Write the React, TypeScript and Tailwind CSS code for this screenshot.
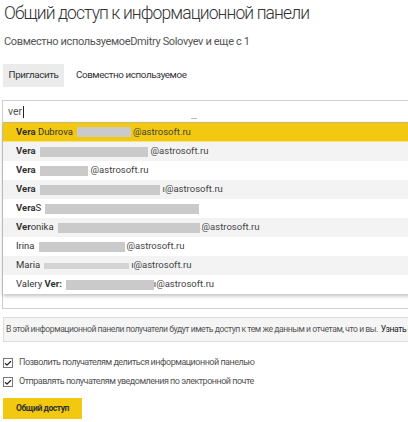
import { Check } from "lucide-react";

const rows = [
  { bold: "Vera", rest: " Dubrova", block: 54, gap: 4, email: "@astrosoft.ru" },
  { bold: "Vera", rest: "", block: 108, gap: 5, email: "@astrosoft.ru" },
  { bold: "Vera", rest: "", block: 48, gap: 5, email: "@astrosoft.ru" },
  { bold: "Vera", rest: "", block: 120, gap: 5, email: "ı@astrosoft.ru" },
  { bold: "Vera", rest: "S", block: 154, gap: 5, email: "" },
  { bold: "Ver", rest: "onika", block: 142, gap: 4, email: "@astrosoft.ru" },
  { bold: "", rest: "Irina", block: 86, gap: 4, email: "@astrosoft.ru" },
  { bold: "", rest: "Maria", block: 85, gap: 4, email: "ı@astrosoft.ru", thin: true },
  { pre: "Valery ", bold: "Ver:", rest: "", block: 88, gap: 2, email: "ı@astrosoft.ru" },
];

export default function App() {
  return (
    <div className="w-[408px] h-[422px] overflow-hidden bg-white text-[#333] font-['Roboto','Liberation_Sans',sans-serif]">
      <h1 className="pl-[4px] pt-[1px] text-[17.5px] leading-[24px] font-light tracking-[-0.9px] text-[#333] whitespace-nowrap">
        Общий доступ к информационной панели
      </h1>
      <p className="pl-[4px] mt-[9px] text-[11px] leading-[16px] tracking-[-0.35px] text-[#555] whitespace-nowrap">
        Совместно используемоеDmitry Solovyev и еще с 1
      </p>
      <div className="flex items-center mt-[14px] pl-[3px] text-[9.8px] tracking-[-0.4px] text-[#333]">
        <div className="h-[23px] w-[61px] bg-[#ebebeb] flex items-center justify-center">Пригласить</div>
        <div className="ml-[12px]">Совместно используемое</div>
      </div>

      <div className="mt-[13px] ml-[2px] w-[430px] h-[209px] border border-[#cfcfcf] flex flex-col">
        <div className="h-[21px] flex items-center pl-[5px] text-[10.5px] text-[#555] relative">
          ver<span className="inline-block w-px h-[12px] bg-[#222] ml-[1px]" />
          <span className="absolute left-[188px] top-[17px] w-[6px] h-px bg-[#bbb]" />
        </div>
        <div className="shadow-[0_2px_4px_rgba(0,0,0,0.25)] text-[9.5px] text-[#333]">
          {rows.map((r, i) => (
            <div
              key={i}
              className={
                "flex items-center pl-[13px] whitespace-nowrap " +
                (i === 0
                  ? "h-[20px] bg-[#f2c811] border-t border-[#c9b67a] border-b border-b-[#f8e27c]"
                  : i % 2 === 1
                  ? "h-[19px] bg-[#f3f3f3]"
                  : "h-[19px] bg-white")
              }
            >
              <span>
                {r.pre}
                <b className="font-bold">{r.bold}</b>
                {r.rest}
              </span>
              <span
                className={"inline-block ml-[4px] blur-[0.6px] " + (r.thin ? "h-[6px] bg-[#d4d4d4]" : "h-[10px] bg-[#cacaca]")}
                style={{ width: r.block }}
              />
              {r.email && (
                <span className="text-[#444]" style={{ marginLeft: r.gap - 2 }}>
                  {r.email}
                </span>
              )}
            </div>
          ))}
        </div>
      </div>

      <div className="mt-[8px] ml-[3px] w-[430px] h-[25px] border border-[#dcdcdc] bg-[#f5f5f5] flex items-center pl-[2px] text-[8.6px] tracking-[-0.45px] text-[#555] whitespace-nowrap">
        В этой информационной панели получатели будут иметь доступ к тем же данным и отчетам, что и вы.
        <span className="text-[#222] ml-[3px]">Узнать больше</span>
      </div>

      <div className="mt-[16px] pl-[3px] flex flex-col gap-[9px] text-[9px] tracking-[-0.5px] text-[#555]">
        {[
          "Позволить получателям делиться информационной панелью",
          "Отправлять получателям уведомления по электронной почте",
        ].map((t) => (
          <label key={t} className="flex items-center h-[10px]">
            <span className="w-[10px] h-[10px] border border-[#777] bg-white flex items-center justify-center">
              <Check size={9} strokeWidth={3.5} className="text-[#222]" />
            </span>
            <span className="ml-[6px] whitespace-nowrap">{t}</span>
          </label>
        ))}
      </div>

      <button className="mt-[11px] ml-[3px] w-[79px] h-[21px] bg-[#f2c811] text-[8.6px] font-bold tracking-[-0.5px] text-[#333] flex items-center justify-center">
        Общий доступ
      </button>
    </div>
  );
}
